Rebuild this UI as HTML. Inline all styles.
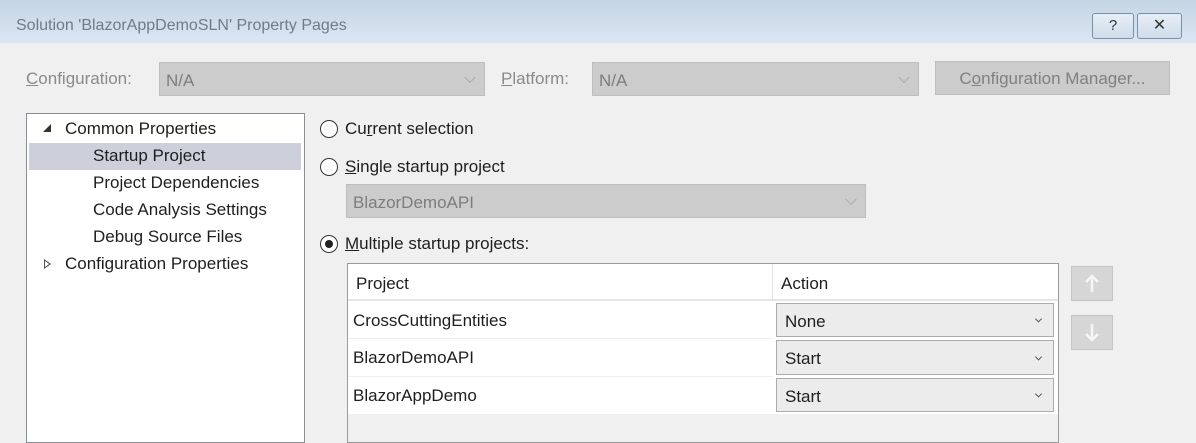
<!DOCTYPE html>
<html><head><style>
*{box-sizing:border-box;margin:0;padding:0}
body{width:1196px;height:430px;overflow:hidden;background:#f0f0f0;font-family:"Liberation Sans",sans-serif;font-size:16px;color:#1e1e1e;position:relative}
.a{position:absolute}
.title{left:0;top:0;width:1196px;height:43px;background:linear-gradient(#c5d4e4,#dae7f3)}
.client{left:8px;top:43px;width:1180px;height:387px;background:#f0f0f0}
.t{white-space:nowrap}
.gray{color:#8a8a8a}
.combo{background:#cccccc;border:1px solid #bebebe;color:#7d7d7d}
.chev{position:absolute;right:10px;top:50%;width:8px;height:8px;border-right:1px solid #aaa;border-bottom:1px solid #aaa;transform:translateY(-70%) rotate(45deg)}
.radio{width:18px;height:18px;border:1px solid #333;border-radius:50%;background:#fff}
.dd{background:#ececec;border:1px solid #acacac;}
.dd .chev{width:5px;height:5px;border-color:#555;right:12px}
</style></head><body>
<div class="a title"></div>
<div class="a t" style="left:16px;top:17px;color:#6f7b88;font-size:16px">Solution 'BlazorAppDemoSLN' Property Pages</div>
<div class="a" style="left:1092px;top:13px;width:42px;height:26px;border:1px solid #7d8fa6;border-radius:3px;background:linear-gradient(#e6eef7,#cfdcea);text-align:center;font-size:15px;line-height:24px;color:#333">?</div>
<div class="a" style="left:1137px;top:13px;width:45px;height:26px;border:1px solid #7d8fa6;border-radius:3px;background:linear-gradient(#e6eef7,#cfdcea);text-align:center;font-size:16px;line-height:24px;color:#333">✕</div>
<div class="a client"></div>

<div class="a t gray" style="left:26px;top:69px;font-size:17px"><u>C</u>onfiguration:</div>
<div class="a combo" style="left:159px;top:62px;width:326px;height:34px"><span class="a" style="left:6px;top:8px;font-size:17px">N/A</span><div class="chev"></div></div>
<div class="a t gray" style="left:501px;top:69px;font-size:17px"><u>P</u>latform:</div>
<div class="a combo" style="left:592px;top:62px;width:327px;height:34px"><span class="a" style="left:6px;top:8px;font-size:17px">N/A</span><div class="chev"></div></div>
<div class="a combo t" style="left:935px;top:61px;width:235px;height:34px;text-align:center;line-height:33px;color:#808080;font-size:17px">C<u>o</u>nfiguration Manager...</div>

<div class="a" style="left:26px;top:113px;width:279px;height:330px;background:#fff;border:1px solid #8a8f97"></div>
<div class="a" style="left:29px;top:143px;width:272px;height:27px;background:#cdd0db"></div>
<div class="a" style="left:43px;top:124px;width:0;height:0;border-left:8px solid transparent;border-bottom:8px solid #333"></div>
<div class="a t" style="left:65px;top:119px;font-size:17px">Common Properties</div>
<div class="a t" style="left:93px;top:146px;font-size:17px">Startup Project</div>
<div class="a t" style="left:93px;top:173px;font-size:17px">Project Dependencies</div>
<div class="a t" style="left:93px;top:200px;font-size:17px">Code Analysis Settings</div>
<div class="a t" style="left:93px;top:227px;font-size:17px">Debug Source Files</div>
<div class="a" style="left:44px;top:259px;width:0;height:0;border-top:5px solid transparent;border-bottom:5px solid transparent;border-left:7px solid #555"></div>
<div class="a" style="left:45px;top:261px;width:0;height:0;border-top:3px solid transparent;border-bottom:3px solid transparent;border-left:4px solid #fff"></div>
<div class="a t" style="left:65px;top:254px;font-size:17px">Configuration Properties</div>

<div class="a radio" style="left:320px;top:120px"></div>
<div class="a t" style="left:345px;top:119px;font-size:17px">Cu<u>r</u>rent selection</div>
<div class="a radio" style="left:320px;top:158px"></div>
<div class="a t" style="left:345px;top:157px;font-size:17px"><u>S</u>ingle startup project</div>
<div class="a combo" style="left:346px;top:184px;width:520px;height:34px"><span class="a" style="left:6px;top:8px;font-size:17px">BlazorDemoAPI</span><div class="chev"></div></div>
<div class="a radio" style="left:320px;top:235px"></div>
<div class="a" style="left:325px;top:240px;width:8px;height:8px;border-radius:50%;background:#222"></div>
<div class="a t" style="left:345px;top:234px;font-size:17px"><u>M</u>ultiple startup projects:</div>

<div class="a" style="left:347px;top:263px;width:712px;height:180px;border:1px solid #9a9a9a;background:#f0f0f0"></div>
<div class="a" style="left:348px;top:264px;width:710px;height:150px;background:#fff"></div>
<div class="a" style="left:348px;top:299px;width:710px;height:2px;background:#e5e5e5"></div>
<div class="a" style="left:772px;top:264px;width:1px;height:36px;background:#e0e0e0"></div>
<div class="a" style="left:348px;top:338px;width:425px;height:1px;background:#eee"></div>
<div class="a" style="left:348px;top:376px;width:425px;height:1px;background:#eee"></div>
<div class="a t" style="left:356px;top:274px;font-size:17px">Project</div>
<div class="a t" style="left:781px;top:274px;font-size:17px">Action</div>
<div class="a t" style="left:353px;top:311px;font-size:17px">CrossCuttingEntities</div>
<div class="a t" style="left:353px;top:348px;font-size:17px">BlazorDemoAPI</div>
<div class="a t" style="left:353px;top:386px;font-size:17px">BlazorAppDemo</div>
<div class="a dd" style="left:776px;top:303px;width:278px;height:34px"><span class="a" style="left:8px;top:8px;font-size:17px">None</span><div class="chev"></div></div>
<div class="a dd" style="left:776px;top:340px;width:278px;height:35px"><span class="a" style="left:8px;top:8px;font-size:17px">Start</span><div class="chev"></div></div>
<div class="a dd" style="left:776px;top:378px;width:278px;height:34px"><span class="a" style="left:8px;top:8px;font-size:17px">Start</span><div class="chev"></div></div>

<div class="a" style="left:1071px;top:266px;width:42px;height:35px;background:#d6d6d6;border:1px solid #c4c4c4"><svg width="40" height="33"><path d="M20 9V25M14 15L20 9L26 15" stroke="#f6f6f6" stroke-width="2.5" fill="none"/></svg></div>
<div class="a" style="left:1071px;top:315px;width:42px;height:35px;background:#d6d6d6;border:1px solid #c4c4c4"><svg width="40" height="33"><path d="M20 8V24M14 18L20 24L26 18" stroke="#f6f6f6" stroke-width="2.5" fill="none"/></svg></div>
</body></html>
